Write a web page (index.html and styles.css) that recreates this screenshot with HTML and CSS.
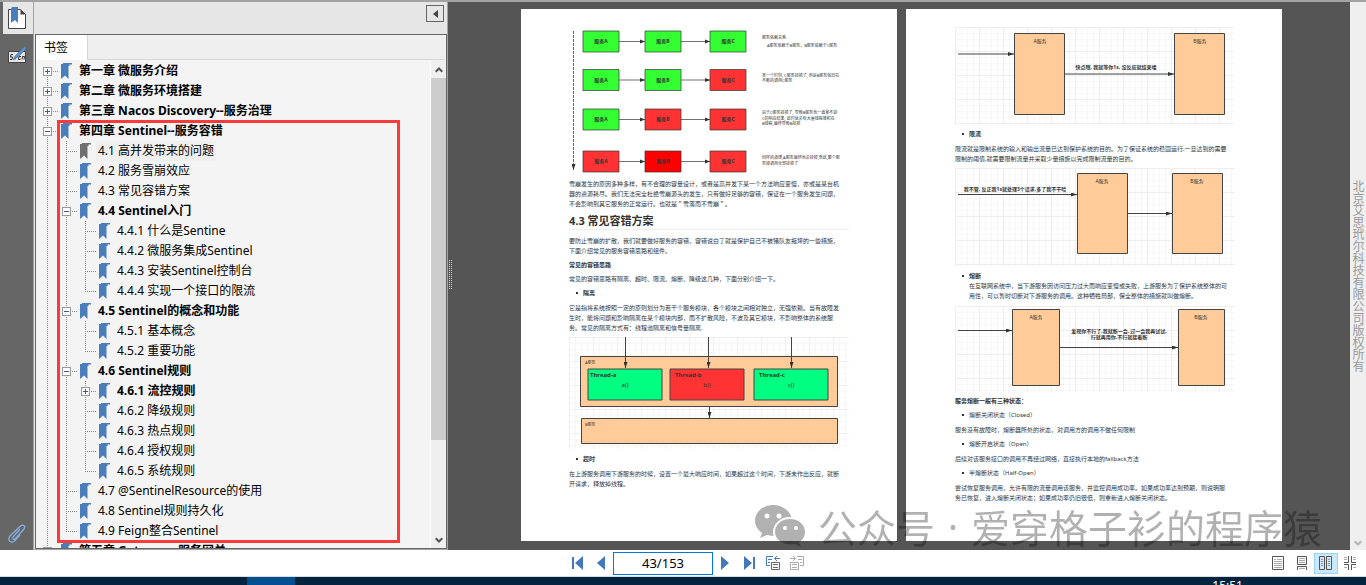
FILE: index.html
```html
<!DOCTYPE html>
<html lang="zh-CN">
<head>
<meta charset="utf-8">
<title>PDF 阅读器</title>
<link rel="stylesheet" href="styles.css">
</head>
<body>
<svg class="defs" aria-hidden="true">
  <defs>
    <symbol id="mark" viewBox="0 0 11 16"><path d="M2 0h9v1.500H8.500V3H7.500V16L4 12.500 0 16V1h2z"/></symbol>
    <marker id="arrow" viewBox="0 0 6 4" markerWidth="6" markerHeight="4" refX="6" refY="2" orient="auto" markerUnits="userSpaceOnUse"><path d="M0 0l6 2-6 2z" fill="#333"/></marker>
    <pattern id="grid" width="24" height="24" patternUnits="userSpaceOnUse">
      <path d="M6.500 0v24M12.500 0v24M18.500 0v24M0 6.500h24M0 12.500h24M0 18.500h24" stroke="#f7f7f7"/>
      <path d="M.5 0v24M0 .5h24" stroke="#eeeeee"/>
    </pattern>
  </defs>
</svg>

<main class="workspace">
  <nav class="rail" aria-label="面板">
    <button class="rail-btn active" aria-label="书签面板">
      <svg width="18" height="22" viewBox="0 0 18 22"><path d="M.5 2.500h12l5 5v14H.500z" fill="#fff" stroke="#444"/><path d="M12.500 2.500v5h5z" fill="#444"/><path d="M4 0h6v16l-3-3-4 3V2z" fill="#4a7ebb"/></svg>
    </button>
    <button class="rail-btn" aria-label="签名面板">
      <svg width="19" height="17" viewBox="0 0 19 17"><path d="M.5 5.500h17v11H.500z" fill="#e4e4e4" stroke="#444"/><path d="M5 8.500H3l-.5 2.500h2L4 13.500H2M7.500 10.500l-.5 3M13 10.500h-2l-.5 3h2M14 13.500l.5-3h2l-.5 3" stroke="#333" fill="none"/><path d="M5 14l2-4 8-8 3-2v3l-8 8z" fill="#5b8fce" stroke="#44688f" stroke-width=".5"/></svg>
    </button>
    <button class="rail-btn attach" aria-label="附件面板">
      <svg width="18" height="20" viewBox="0 0 18 20"><path d="M12 5L5 13c-1 2 1 3 2 2l9-10c2-3-1-5-3.500-3L2 12c-3 4 1 8 4.500 5l5.500-6" fill="none" stroke="#83aede" stroke-width="1.300"/></svg>
    </button>
  </nav>

  <aside class="panel">
    <header class="panel-head"><button class="collapse" aria-label="收起"><svg width="5" height="8" viewBox="0 0 5 8"><path d="M5 0v8L0 4z" fill="#444"/></svg></button></header>
    <div class="panel-body">
      <div class="tabs"><button class="tab">书签</button></div>
      <div class="tree-wrap">
        <ul class="tree">
          <li><div class="row bold"><span class="slot"><button class="exp plus" aria-label="展开"></button></span><svg class="bm"><use href="#mark"/></svg><a href="#c1">第一章 微服务介绍</a></div></li>
          <li><div class="row bold"><span class="slot"><button class="exp plus" aria-label="展开"></button></span><svg class="bm"><use href="#mark"/></svg><a href="#c2">第二章 微服务环境搭建</a></div></li>
          <li><div class="row bold"><span class="slot"><button class="exp plus" aria-label="展开"></button></span><svg class="bm"><use href="#mark"/></svg><a href="#c3">第三章 Nacos Discovery--服务治理</a></div></li>
          <li><div class="row bold"><span class="slot"><button class="exp" aria-label="收起"></button></span><svg class="bm"><use href="#mark"/></svg><a href="#c4">第四章 Sentinel--服务容错</a></div>
            <ul>
              <li><div class="row current"><span class="slot"></span><svg class="bm"><use href="#mark"/></svg><a href="#s41">4.1 高并发带来的问题</a></div></li>
              <li><div class="row"><span class="slot"></span><svg class="bm"><use href="#mark"/></svg><a href="#s42">4.2 服务雪崩效应</a></div></li>
              <li><div class="row"><span class="slot"></span><svg class="bm"><use href="#mark"/></svg><a href="#s43">4.3 常见容错方案</a></div></li>
              <li><div class="row bold"><span class="slot"><button class="exp" aria-label="收起"></button></span><svg class="bm"><use href="#mark"/></svg><a href="#s44">4.4 Sentinel入门</a></div>
                <ul>
                  <li><div class="row"><span class="slot"></span><svg class="bm"><use href="#mark"/></svg><a href="#s441">4.4.1 什么是Sentine</a></div></li>
                  <li><div class="row"><span class="slot"></span><svg class="bm"><use href="#mark"/></svg><a href="#s442">4.4.2 微服务集成Sentinel</a></div></li>
                  <li><div class="row"><span class="slot"></span><svg class="bm"><use href="#mark"/></svg><a href="#s443">4.4.3 安装Sentinel控制台</a></div></li>
                  <li><div class="row"><span class="slot"></span><svg class="bm"><use href="#mark"/></svg><a href="#s444">4.4.4 实现一个接口的限流</a></div></li>
                </ul>
              </li>
              <li><div class="row bold"><span class="slot"><button class="exp" aria-label="收起"></button></span><svg class="bm"><use href="#mark"/></svg><a href="#s45">4.5 Sentinel的概念和功能</a></div>
                <ul>
                  <li><div class="row"><span class="slot"></span><svg class="bm"><use href="#mark"/></svg><a href="#s451">4.5.1 基本概念</a></div></li>
                  <li><div class="row"><span class="slot"></span><svg class="bm"><use href="#mark"/></svg><a href="#s452">4.5.2 重要功能</a></div></li>
                </ul>
              </li>
              <li><div class="row bold"><span class="slot"><button class="exp" aria-label="收起"></button></span><svg class="bm"><use href="#mark"/></svg><a href="#s46">4.6 Sentinel规则</a></div>
                <ul>
                  <li><div class="row bold"><span class="slot"><button class="exp plus" aria-label="展开"></button></span><svg class="bm"><use href="#mark"/></svg><a href="#s461">4.6.1 流控规则</a></div></li>
                  <li><div class="row"><span class="slot"></span><svg class="bm"><use href="#mark"/></svg><a href="#s462">4.6.2 降级规则</a></div></li>
                  <li><div class="row"><span class="slot"></span><svg class="bm"><use href="#mark"/></svg><a href="#s463">4.6.3 热点规则</a></div></li>
                  <li><div class="row"><span class="slot"></span><svg class="bm"><use href="#mark"/></svg><a href="#s464">4.6.4 授权规则</a></div></li>
                  <li><div class="row"><span class="slot"></span><svg class="bm"><use href="#mark"/></svg><a href="#s465">4.6.5 系统规则</a></div></li>
                </ul>
              </li>
              <li><div class="row"><span class="slot"></span><svg class="bm"><use href="#mark"/></svg><a href="#s47">4.7 @SentinelResource的使用</a></div></li>
              <li><div class="row"><span class="slot"></span><svg class="bm"><use href="#mark"/></svg><a href="#s48">4.8 Sentinel规则持久化</a></div></li>
              <li><div class="row"><span class="slot"></span><svg class="bm"><use href="#mark"/></svg><a href="#s49">4.9 Feign整合Sentinel</a></div></li>
            </ul>
          </li>
          <li><div class="row bold"><span class="slot"><button class="exp" aria-label="收起"></button></span><svg class="bm"><use href="#mark"/></svg><a href="#c5">第五章 Gateway--服务网关</a></div></li>
        </ul>
        <div class="scrollbar">
          <svg width="8" height="6" viewBox="0 0 8 6"><path d="M.7 4.700L4 1.500l3.300 3.200" fill="none" stroke="#555" stroke-width="2"/></svg>
          <div class="thumb"></div>
          <svg width="8" height="6" viewBox="0 0 8 6"><path d="M.7 1.300L4 4.500l3.300-3.200" fill="none" stroke="#555" stroke-width="2"/></svg>
        </div>
        <div class="highlight"></div>
      </div>
    </div>
  </aside>

  <section class="viewer">
    <div class="grip"></div>
    <article class="page first">
      <svg class="figure" viewBox="0 0 280 150">
        <path d="M4.500 6v139" stroke="#444" stroke-width=".8" stroke-dasharray="3 1" marker-end="url(#arrow)"/>
        <g stroke="#333" stroke-width=".7">
          <path d="M50 16.500h26M112 16.500h29M50 55h26M112 55h29M50 94.500h26M112 94.500h29M50 136.500h26M112 136.500h29" fill="none"/>
          <g fill="#333" stroke="none"><path d="M71 14.500l5 2-5 2zM136 14.500l5 2-5 2zM71 53l5 2-5 2zM136 53l5 2-5 2zM71 92.500l5 2-5 2zM136 92.500l5 2-5 2zM71 134.500l5 2-5 2zM136 134.500l5 2-5 2z"/></g>
          <g fill="#3f3"><path d="M14 6h36v21H14zM76 6h36v21H76zM141 6h36v21h-36zM14 44.500h36v21H14zM76 44.500h36v21H76zM14 84h36v21H14z"/></g>
          <g fill="#f33"><path d="M141 44.500h36v21h-36zM76 84h36v21H76zM141 84h36v21h-36zM14 126h36v21H14zM141 126h36v21h-36z"/></g>
          <path d="M76 126h36v21H76z" fill="#f00"/>
        </g>
        <g class="t5 mid strong">
          <text x="32" y="18">服务A</text><text x="94" y="18">服务B</text><text x="159" y="18">服务C</text>
          <text x="32" y="57">服务A</text><text x="94" y="57">服务B</text><text x="159" y="57">服务C</text>
          <text x="32" y="96">服务A</text><text x="94" y="96">服务B</text><text x="159" y="96">服务C</text>
          <text x="32" y="138">服务A</text><text x="94" y="138">服务B</text><text x="159" y="138">服务C</text>
        </g>
        <g class="t4">
          <text x="193" y="14">服务依赖关系:</text><text x="198" y="22">A服务依赖于B服务，B服务依赖于C服务</text>
          <text x="193" y="52">某一个时刻, C服务挂掉了, 但是B服务依旧在</text><text x="193" y="57">不断的调用C服务</text>
          <text x="193" y="89">由于C服务挂掉了, 导致B服务也一直拿不到</text><text x="193" y="95">C的响应结果, 此时就会有大量线程堆积在</text><text x="193" y="100">B线程,最终导致B挂掉</text>
          <text x="193" y="134">同样的道理,A服务最终也会挂掉,至此,整个服</text><text x="193" y="140">务链调用全部挂掉了</text>
        </g>
      </svg>
      <p>雪崩发生的原因多种多样，有不合理的容量设计，或者是高并发下某一个方法响应变慢，亦或是某台机<br>器的资源耗尽。我们无法完全杜绝雪崩源头的发生，只有做好足够的容错，保证在一个服务发生问题，<br>不会影响到其它服务的正常运行。也就是＂雪落而不雪崩＂。</p>
      <h2>4.3 常见容错方案</h2>
      <p>要防止雪崩的扩散，我们就要做好服务的容错，容错说白了就是保护自己不被猪队友拖垮的一些措施，<br>下面介绍常见的服务容错思路和组件。</p>
      <p><strong>常见的容错思路</strong></p>
      <p>常见的容错思路有隔离、超时、限流、熔断、降级这几种，下面分别介绍一下。</p>
      <ul class="points"><li><strong>隔离</strong></li></ul>
      <p>它是指将系统按照一定的原则划分为若干个服务模块，各个模块之间相对独立，无强依赖。当有故障发<br>生时，能将问题和影响隔离在某个模块内部，而不扩散风险，不波及其它模块，不影响整体的系统服<br>务。常见的隔离方式有：线程池隔离和信号量隔离.</p>
      <svg class="figure pad" viewBox="0 0 280 112">
        <path d="M0 0h280v112H0z" fill="url(#grid)"/>
        <g stroke="#444">
          <path d="M11.500 19.500h257v50h-257zM12.500 81.500h256v25h-256z" fill="#fc9"/>
          <path d="M19 32h74v31H19zM185 32h74v31h-74z" fill="#00ff80"/>
          <path d="M101 32h74v31h-74z" fill="#f33"/>
          <path d="M56.500 0v31" marker-end="url(#arrow)"/>
          <path d="M139.500 0v31" marker-end="url(#arrow)"/>
          <path d="M222.500 0v31" marker-end="url(#arrow)"/>
          <path d="M140.500 70v11" marker-end="url(#arrow)"/>
        </g>
        <g class="t4"><text x="16" y="27">A服务</text><text x="16" y="89">B服务</text></g>
        <g class="t6 strong"><text x="21" y="40">Thread-a</text><text x="106" y="40">Thread-b</text><text x="190" y="40">Thread-c</text></g>
        <g class="t6 mid"><text x="56" y="50">a()</text><text x="138" y="50">b()</text><text x="222" y="50">c()</text></g>
      </svg>
      <ul class="points"><li><strong>超时</strong></li></ul>
      <p>在上游服务调用下游服务的时候，设置一个最大响应时间，如果超过这个时间，下游未作出反应，就断<br>开请求，释放掉线程。</p>
    </article>

    <article class="page">
      <svg class="figure" viewBox="0 0 280 98">
        <path d="M0 0h280v98H0z" fill="url(#grid)"/>
        <g stroke="#444"><path d="M59.500 6.500h50v81h-50zM219.500 6.500h50v81h-50z" fill="#fc9"/><path d="M3 27h56" marker-end="url(#arrow)"/><path d="M110 47h109" marker-end="url(#arrow)"/></g>
        <g class="t5 mid"><text x="85" y="16">A服务</text><text x="245" y="16">B服务</text><text class="strong" x="161" y="42">快点哦, 我就等你1s, 没反应就结束喽</text></g>
      </svg>
      <ul class="points"><li><strong>限流</strong></li></ul>
      <p>限流就是限制系统的输入和输出流量已达到保护系统的目的。为了保证系统的稳固运行,一旦达到的需要<br>限制的阈值,就需要限制流量并采取少量措施以完成限制流量的目的。</p>
      <svg class="figure" viewBox="0 0 280 99">
        <path d="M0 0h280v99H0z" fill="url(#grid)"/>
        <g stroke="#444"><path d="M122.500 5.500h50v80h-50zM217.500 5.500h50v80h-50z" fill="#fc9"/><path d="M3 26.500h119" marker-end="url(#arrow)"/><path d="M172 45.500h45" marker-end="url(#arrow)"/></g>
        <g class="t5 mid"><text x="147" y="15">A服务</text><text x="242" y="15">B服务</text><text class="strong" x="60" y="23">我不管, 反正我1s就处理3个请求,多了我不干哈</text></g>
      </svg>
      <ul class="points"><li><strong>熔断</strong><br>在互联网系统中，当下游服务因访问压力过大而响应变慢或失败，上游服务为了保护系统整体的可<br>用性，可以暂时切断对下游服务的调用。这种牺牲局部，保全整体的措施就叫做熔断。</li></ul>
      <svg class="figure" viewBox="0 0 280 86">
        <path d="M0 0h280v86H0z" fill="url(#grid)"/>
        <g stroke="#444"><path d="M57.500 3.500h47v76h-47zM223.500 3.500h46v76h-46z" fill="#fc9"/><path d="M3 24.500h54" marker-end="url(#arrow)"/><path d="M105 41.500h118" marker-end="url(#arrow)"/></g>
        <g class="t5 mid"><text x="81" y="13">A服务</text><text x="246" y="13">B服务</text><text class="strong" x="164" y="27">发现你不行了,我就断一会, 过一会我再试试,</text><text class="strong" x="164" y="33">行就再用你,不行就接着断</text></g>
      </svg>
      <p><strong>服务熔断一般有三种状态：</strong></p>
      <ul class="points"><li>熔断关闭状态（Closed）</li></ul>
      <p>服务没有故障时，熔断器所处的状态，对调用方的调用不做任何限制</p>
      <ul class="points"><li>熔断开启状态（Open）</li></ul>
      <p>后续对该服务接口的调用不再经过网络，直接执行本地的fallback方法</p>
      <ul class="points"><li>半熔断状态（Half-Open）</li></ul>
      <p>尝试恢复服务调用，允许有限的流量调用该服务，并监控调用成功率。如果成功率达到预期，则说明服<br>务已恢复，进入熔断关闭状态；如果成功率仍旧很低，则重新进入熔断关闭状态。</p>
    </article>

    <div class="watermark">
      <svg width="52" height="44" viewBox="0 0 52 44">
        <mask id="bubbles"><rect width="52" height="44" fill="#fff"/><ellipse cx="35" cy="28" rx="17" ry="15" fill="#000"/><circle cx="12" cy="12" r="2.500"/><circle cx="24" cy="12" r="2.500"/></mask>
        <mask id="eyes"><rect width="52" height="44" fill="#fff"/><circle cx="30" cy="24" r="2"/><circle cx="41" cy="24" r="2"/></mask>
        <g mask="url(#bubbles)"><path d="M18 1C8 1 0 8 0 17c0 5 3 9 7 12l-2 5 7-3c20 4 25-6 25-14C37 8 28 1 18 1z"/></g>
        <g mask="url(#eyes)"><path d="M35 15c-9 0-15 6-15 13 0 8 9 14 20 12l6 3-2-5c4-2 6-6 6-10 0-7-6-13-15-13z"/></g>
      </svg>
      <span>公众号</span><span class="dot">·</span><span>爱穿格子衫的程序猿</span>
    </div>
  </section>
  <div class="side">
    <span></span>
    <p class="notice">北京艾思玳尔科技有限公司版权所有</p>
    <svg width="8" height="6" viewBox="0 0 8 6"><path d="M.7 1.300L4 4.500l3.300-3.200" fill="none" stroke="#b5b5b5" stroke-width="2"/></svg>
  </div>
</main>

<footer class="controls">
  <div class="pager">
    <button class="start" aria-label="第一页"><svg width="11" height="14" viewBox="0 0 11 14"><path d="M0 1h2v12H0zM11 0v14L3 7z" fill="#4379b8"/></svg></button>
    <button aria-label="上一页"><svg width="8" height="14" viewBox="0 0 8 14"><path d="M8 0v14L0 7z" fill="#4379b8"/></svg></button>
    <input type="text" value="43/153" aria-label="页码">
    <button aria-label="下一页"><svg width="8" height="14" viewBox="0 0 8 14"><path d="M0 0v14l8-7z" fill="#4379b8"/></svg></button>
    <button class="last" aria-label="最后一页"><svg width="11" height="14" viewBox="0 0 11 14"><path d="M9 1h2v12H9zM0 0v14l8-7z" fill="#4379b8"/></svg></button>
    <button aria-label="后退视图"><svg width="15" height="16" viewBox="0 0 15 16" fill="none"><path d="M7 1.500H.500v9H4" stroke="#4379b8"/><path d="M2 4.500h4M2 7.500h2M14 3.500H9M11 1L8.500 3.500 11 6" stroke="#4379b8"/><path d="M5.500 7.500h8v7h-8zM7 9.500h5M7 12.500h5" stroke="#666"/></svg></button>
    <button aria-label="前进视图"><svg width="15" height="16" viewBox="0 0 15 16" fill="none" stroke="#aaa"><path d="M8 1.500h6.500v9H11M9 4.500h4M11 7.500h2M1 3.500h5M4 1l2.500 2.500L4 6M1.500 7.500h8v7h-8zM3 9.500h5M3 12.500h5"/></svg></button>
  </div>
  <div class="modes">
    <button aria-label="单页"><svg width="12" height="14" viewBox="0 0 12 14" fill="none"><path d="M.5.500h11v13H.500z" stroke="#555"/><path d="M2 3.500h2M5 3.500h5M2 5.500h8M2 7.500h8M2 9.500h8M2 11.500h8" stroke="#aaa"/></svg></button>
    <button aria-label="连续"><svg width="10" height="14" viewBox="0 0 10 14" fill="none"><path d="M.5.500h9v8h-9zM.500 14v-3.500h9V14" stroke="#555"/><path d="M2 2.500h6M2 4.500h6M2 6.500h6M2 12.500h6" stroke="#aaa"/></svg></button>
    <button class="on" aria-label="双页"><svg width="14" height="14" viewBox="0 0 14 14" fill="none"><path d="M.5.500h5v13h-5zM7.500 .500h5v13h-5z" stroke="#555"/><path d="M2 3.500h2M2 5.500h2M2 7.500h2M2 9.500h2M9 3.500h2M9 5.500h2M9 7.500h2M9 9.500h2" stroke="#999"/></svg></button>
    <button aria-label="双页连续"><svg width="12" height="14" viewBox="0 0 12 14" fill="none"><path d="M0 6.500h4.500V0M7.500 0v6.500H12M0 8.500h4.500V14M12 8.500H7.500V14" stroke="#555"/><path d="M0 1.500h3M0 3.500h3M9 1.500h3M9 3.500h3M0 11.500h3M9 11.500h3" stroke="#aaa"/></svg></button>
  </div>
</footer>
<div class="taskbar"><span class="task"></span><time>15:51</time></div>
</body>
</html>
```
FILE: styles.css
```css
* { box-sizing: border-box; }
body {
  margin: 0;
  height: 100vh;
  display: flex;
  flex-direction: column;
  overflow: hidden;
  font: 12px/20px "Noto Sans", "Noto Sans CJK SC", sans-serif;
  color: #000;
}
button { padding: 0; border: 0; background: none; font: inherit; color: inherit; display: flex; align-items: center; justify-content: center; }
ul { list-style: none; margin: 0; padding: 0; }
p, h2 { margin: 0; }
.defs { position: absolute; width: 0; height: 0; }

.workspace { flex: 1; min-height: 0; display: flex; border-top: 2px solid #a3a3a3; background: #555; }

.rail { width: 34px; flex: none; display: flex; flex-direction: column; background: #666; border-right: 1px solid #a3a3a3; padding-left: 3px; }
.rail-btn { height: 32px; margin-bottom: 4px; padding-right: 2px; }
.rail-btn.active { background: #e6e6e6; }
.rail-btn.attach { margin: auto 0 6px; height: 20px; }

.panel { width: 414px; flex: none; display: flex; flex-direction: column; background: #e6e6e6; border-right: 1px solid #a3a3a3; border-bottom: 1px solid #a3a3a3; }
.panel-head { height: 32px; display: flex; justify-content: flex-end; padding: 3px 3px 0 0; }
.collapse { width: 18px; height: 17px; border: 1px solid #666; }
.panel-body { flex: 1; min-height: 0; display: flex; flex-direction: column; margin-left: 1px; border: 1px solid #666; background: #efefef; }
.tabs { height: 25px; border-bottom: 1px solid #d6d6d6; display: flex; margin-right: 2px; }
.tab { width: 52px; height: 25px; background: #fff; border-right: 1px solid #d6d6d6; justify-content: flex-start; padding-left: 8px; }

.tree-wrap { flex: 1; min-height: 0; display: flex; position: relative; background: #f4f4f4; overflow: hidden; }
.tree { flex: 1; padding: 1px 0 0 7px; }
.tree ul { padding-left: 19px; }
.tree li {
  background-image: repeating-linear-gradient(to bottom, #888 0 1px, transparent 1px 2px);
  background-size: 1px 100%;
  background-position: 4px 0;
  background-repeat: no-repeat;
}
.tree li:last-child { background-size: 1px 10px; }
.tree > li:first-child { background-position: 4px 10px; }
.row { height: 20px; display: flex; align-items: center; }
.slot {
  width: 18px; height: 9px; display: flex; align-items: center;
  background: repeating-linear-gradient(to right, #888 0 1px, transparent 1px 2px) 4px 4px / 11px 1px no-repeat;
}
.exp {
  width: 9px; height: 9px; border: 1px solid #999;
  background: linear-gradient(#3c5a9a, #3c5a9a) center / 5px 1px no-repeat, #fff;
}
.exp.plus { background: linear-gradient(#3c5a9a, #3c5a9a) center / 5px 1px no-repeat, linear-gradient(#3c5a9a, #3c5a9a) center / 1px 5px no-repeat, #fff; }
.bm { width: 11px; height: 16px; flex: none; fill: #4a7ebb; }
.row a { color: #000; text-decoration: none; white-space: nowrap; padding: 0 2px; margin-left: 5px; }
.bold a { font-weight: 700; }
.current .bm { fill: #707070; }
.current a { background: #efefef; }
.scrollbar { width: 16px; flex: none; background: #efefef; border-left: 1px solid #fff; display: flex; flex-direction: column; align-items: center; gap: 5px; padding: 7px 0 5px; }
.thumb { width: 100%; flex: none; height: calc(80% - 19px); background: #cdcdcd; }
.scrollbar svg:last-child { margin-top: auto; }
.highlight { position: absolute; top: 60px; left: 21px; right: 46px; bottom: 5px; border: 3px solid #fb3a3a; }

.viewer { flex: 1; min-width: 0; position: relative; display: flex; justify-content: center; align-items: flex-start; gap: 9px; padding: 7px 0 0 5px; overflow: hidden; background: #555; }
.grip { position: absolute; left: 1px; top: 258px; width: 3px; height: 30px; background: repeating-linear-gradient(to bottom, transparent 0 1px, #555 1px 2px), linear-gradient(to right, #ccc 0 1px, #555 1px 2px, #ccc 2px); }
.page {
  width: 376px; height: calc(100% - 9px); background: #fff; color: #333;
  display: flex; flex-direction: column; gap: 4px;
  padding: 18px 47px 0 49px;
  font-size: 6px; line-height: 10px; white-space: nowrap;
}
.page.first { padding: 16px 48px 0; }
.page h2 { font-size: 11px; line-height: 16px; border-bottom: 1px solid #eee; margin-bottom: 2px; }
.points { margin-bottom: 1px; }
.points li { padding-left: 14px; background: radial-gradient(circle at 8px 5px, #333 0 1px, transparent 1px); }
.figure { width: 100%; flex: none; display: block; }
.figure.pad { margin-bottom: 1px; }
.figure text { fill: #333; stroke: none; }
.t4 { font-size: 4px; }
.t5 { font-size: 5px; }
.t6 { font-size: 6px; }
.mid { text-anchor: middle; }
.strong { font-weight: 700; }

.watermark { position: absolute; right: 28px; bottom: 0; display: flex; align-items: center; gap: 11px; padding-bottom: 2px; font: 39px/44px "Noto Sans CJK SC", sans-serif; color: #000; opacity: .3; white-space: nowrap; }
.watermark .dot { width: 14px; text-align: center; font-family: "Noto Sans", sans-serif; }

.side { width: 16px; flex: none; background: #efefef; display: flex; flex-direction: column; align-items: center; justify-content: space-between; padding: 10px 0 4px; }
.notice { writing-mode: vertical-rl; font: 12px/16px "Noto Sans CJK SC", sans-serif; color: #999; }

.controls { height: 27px; flex: none; background: #fff; border-bottom: 1px solid #d9dfe0; display: grid; grid-template-columns: 1fr auto 1fr; align-items: center; }
.pager { grid-column: 2; display: flex; align-items: center; gap: 8px; padding-left: 10px; }
.pager .start { margin-right: 6px; }
.pager .last { margin: 0 3px 0 7px; }
.pager input { width: 100px; height: 23px; border: 1px solid #0078d7; padding: 0; text-align: center; font: 13px/20px "Noto Sans", sans-serif; color: #000; background: #fff; }
.modes { display: flex; justify-content: flex-end; align-items: center; padding-right: 4px; }
.modes button { width: 24px; height: 21px; }
.modes .on { background: #cce8ff; border: 1px solid #99d1ff; }

.taskbar { height: 8px; flex: none; overflow: hidden; background: #03233f; display: flex; justify-content: space-between; padding: 0 123px 0 247px; }
.task { width: 48px; background: #00508f; }
.taskbar time { color: #fff; line-height: 18px; }
```
